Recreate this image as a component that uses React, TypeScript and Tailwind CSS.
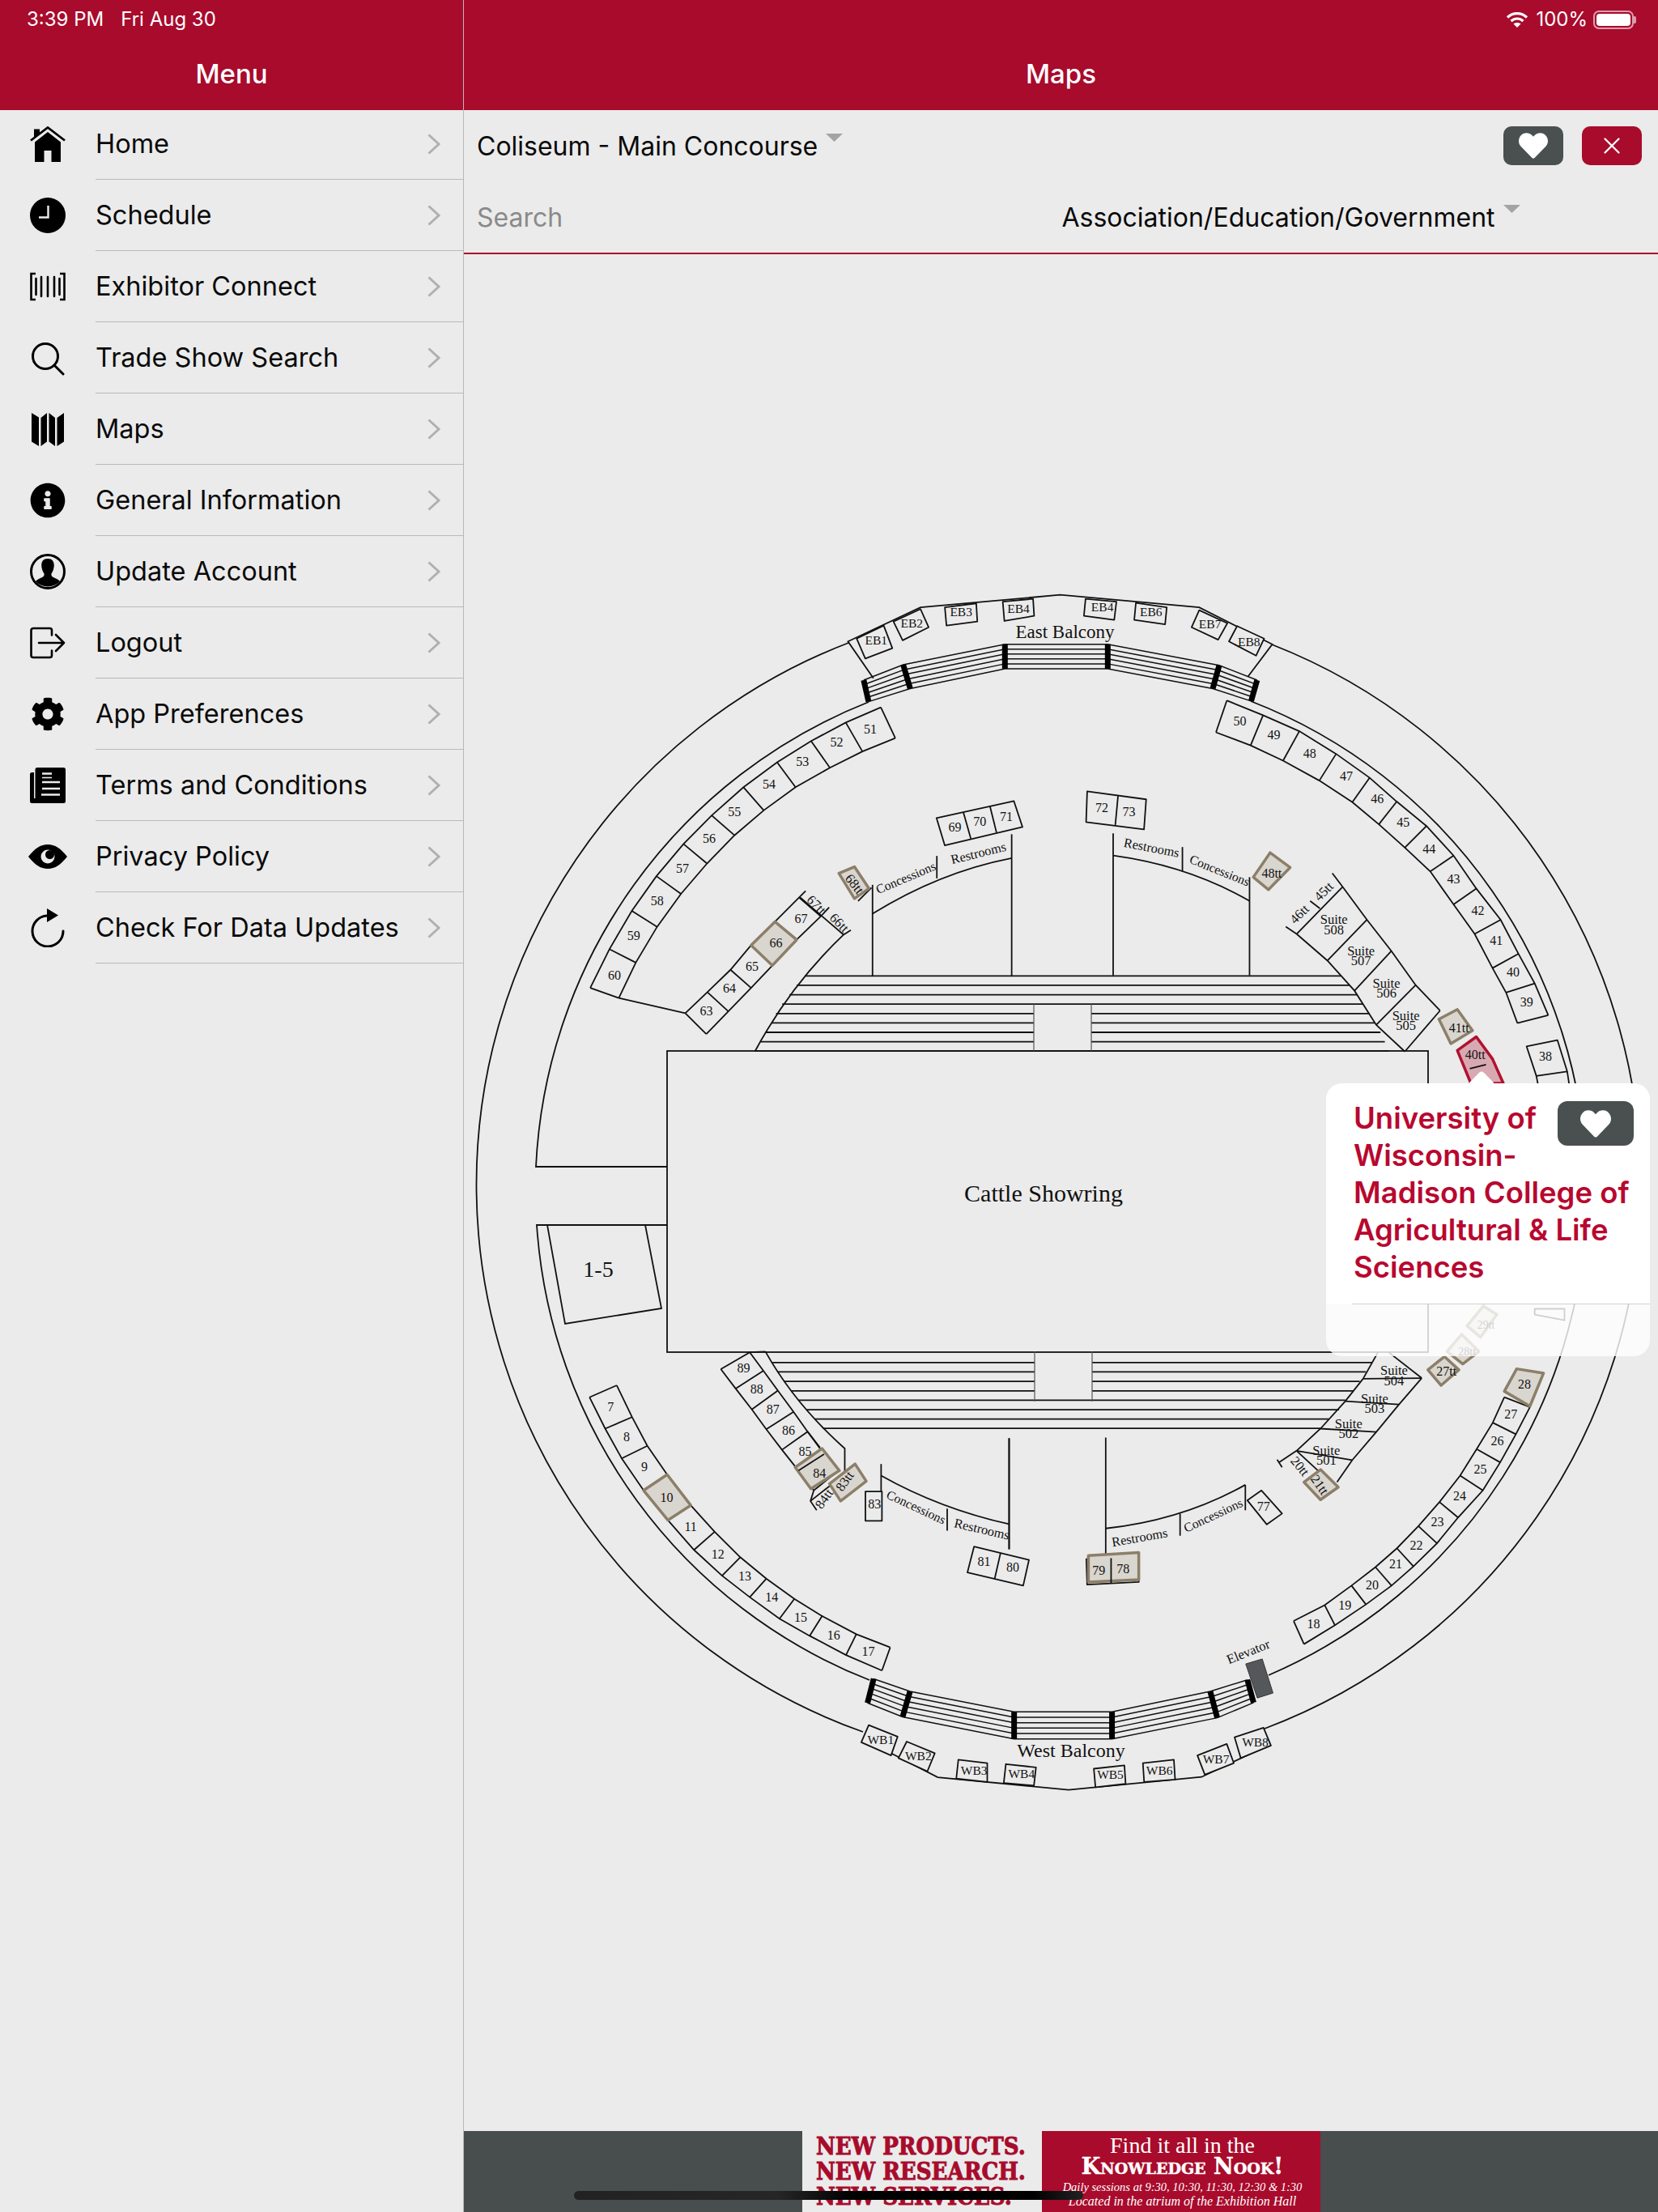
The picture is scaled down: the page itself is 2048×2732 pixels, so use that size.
import type { ReactNode } from "react";
import { FaCog, FaHeart, FaInfoCircle } from "react-icons/fa";
import { X } from "lucide-react";

type P = [number, number];

// crop helpers: map positions were read off zoomed crops of the floor plan
const a = (x: number, y: number): P => [580 + x / 2.24, 700 + y / 2.24];
const b = (x: number, y: number): P => [1000 + x / 1.496, 680 + y / 1.4255];
const c = (x: number, y: number): P => [620 + x / 1.96, 1600 + y / 2.45];
const d = (x: number, y: number): P => [1200 + x / 1.96, 1600 + y / 2.45];

const INK = "#111";
const pts = (list: P[]) => list.map((p) => p.join(",")).join(" ");

function Poly({ p, fill = "none", stroke = INK, w = 1.8 }: { p: P[]; fill?: string; stroke?: string; w?: number }) {
  return <polygon points={pts(p)} fill={fill} stroke={stroke} strokeWidth={w} strokeLinejoin="round" />;
}

function Line({ p, w = 1.8, stroke = INK }: { p: P[]; w?: number; stroke?: string }) {
  return <polyline points={pts(p)} fill="none" stroke={stroke} strokeWidth={w} />;
}

function Hi({ p, red }: { p: P[]; red?: boolean }) {
  return <Poly p={p} fill={red ? "#d8a9b2" : "#d9d5cf"} stroke={red ? "#b0122f" : "#8c7f69"} w={3.5} />;
}

function T({ at, r = 0, s = 16, children }: { at: P; r?: number; s?: number; children: ReactNode }) {
  return (
    <text
      x={at[0]}
      y={at[1]}
      fontSize={s}
      textAnchor="middle"
      dominantBaseline="central"
      fill="#111"
      transform={r ? `rotate(${r} ${at[0]} ${at[1]})` : undefined}
    >
      {children}
    </text>
  );
}

function Strip({ rows }: { rows: P[][] }) {
  return (
    <g>
      <Line p={rows.map((r) => r[0])} />
      <Line p={rows.map((r) => r[1])} />
      {rows.map((r, i) => (
        <Line key={i} p={r} />
      ))}
    </g>
  );
}

const pairs = (m: (x: number, y: number) => P, list: number[][]) => list.map(([x1, y1, x2, y2]) => [m(x1, y1), m(x2, y2)]);

const row60 = pairs(a, [[334,1165,413,1193],[387,1058,460,1095],[449,952,519,996],[517,856,585,905],[592,767,657,821],[670,688,733,743],[758,610,814,674],[851,541,902,610],[945,482,997,556],[1041,431,1087,511],[1138,389,1178,474]]);
const row63 = pairs(a, [[597,1235,655,1293],[658,1177,716,1230],[722,1115,779,1165],[779,1047,838,1103],[845,982,905,1032],[912,915,972,967]]);
const row50 = pairs(b, [[771,264,751,320],[838,290,815,343],[905,318,875,370],[973,358,942,405],[1035,400,1003,443],[1085,442,1052,482],[1140,485,1100,523],[1190,537,1147,565],[1232,595,1190,623],[1277,650,1229,675],[1310,710,1262,735],[1340,762,1287,778],[1365,818,1308,832]]);
const suitesTop = pairs(b, [[985,592,900,675],[1030,650,957,722],[1075,705,1007,775],[1120,765,1047,835],[1165,810,1100,882]]);
const suitesBot = pairs(d, [[1090,250,948,252],[1035,330,905,320],[980,413,845,403],[922,498,787,470]]);
const row28 = pairs(d, [[1290,308,1352,338],[1262,385,1318,420],[1223,465,1280,505],[1183,545,1238,590],[1133,625,1178,672],[1082,698,1127,750],[1030,765,1070,820],[978,822,1017,878],[920,878,955,935],[855,937,880,998],[780,985,805,1055]]);
const row7 = pairs(c, [[212,308,278,272],[250,403,315,368],[290,493,352,455],[343,590,400,542],[402,680,457,635],[465,770,515,715],[533,848,577,792],[600,913,640,857],[672,978,708,918],[745,1030,775,970],[833,1088,858,1025],[920,1135,940,1065]]);
const row89 = pairs(c, [[530,223,600,172],[566,282,633,228],[605,345,668,288],[640,405,706,352],[678,467,740,412],[718,530,780,480],[755,590,815,530]]);

const labels: [P, string][] = [
  ...([[401,1130,"60"],[454,1020,"59"],[519,925,"58"],[589,834,"57"],[663,751,"56"],[733,678,"55"],[829,602,"54"],[921,538,"53"],[1016,486,"52"],[1109,450,"51"],[655,1229,"63"],[719,1165,"64"],[782,1105,"65"],[848,1041,"66"],[917,973,"67"],[1343,720,"69"],[1412,705,"70"],[1485,690,"71"]] as [number, number, string][]).map(([x, y, t]): [P, string] => [a(x, y), t]),
  ...([[795,300,"50"],[858,325,"49"],[924,357,"48"],[992,397,"47"],[1049,437,"46"],[1097,478,"45"],[1145,525,"44"],[1190,578,"43"],[1235,633,"42"],[1269,687,"41"],[1300,742,"40"],[1325,795,"39"],[1360,890,"38"],[540,453,"72"],[590,460,"73"],[854,568,"48tt"],[1200,841,"41tt"],[1230,887,"40tt"],[1321,1468,"28"],[1296,1520,"27"]] as [number, number, string][]).map(([x, y, t]): [P, string] => [b(x, y), t]),
  ...([[263,337,"7"],[302,428,"8"],[345,518,"9"],[399,612,"10"],[457,700,"11"],[523,783,"12"],[588,850,"13"],[653,913,"14"],[723,973,"15"],[803,1028,"16"],[887,1077,"17"],[585,220,"89"],[617,282,"88"],[656,345,"87"],[694,407,"86"],[734,472,"85"],[769,537,"84"],[902,630,"83"],[1167,805,"81"],[1237,823,"80"]] as [number, number, string][]).map(([x, y, t]): [P, string] => [c(x, y), t]),
  ...([[1273,440,"26"],[1232,525,"25"],[1182,607,"24"],[1128,685,"23"],[1077,755,"22"],[1027,813,"21"],[970,877,"20"],[904,937,"19"],[828,993,"18"],[707,638,"77"],[308,832,"79"],[367,827,"78"],[1150,230,"27tt"]] as [number, number, string][]).map(([x, y, t]): [P, string] => [d(x, y), t]),
];

const balconyBoxes: [P[], P, string][] = [
  [[b(87,155),b(137,132),b(153,172),b(103,190)], b(123,157), "EB1"],
  [[b(155,125),b(205,103),b(220,135),b(172,158)], b(189,127), "EB2"],
  [[b(250,100),b(308,93),b(310,125),b(253,132)], b(280,108), "EB3"],
  [[b(357,90),b(413,85),b(415,115),b(360,124)], b(386,102), "EB4"],
  [[b(510,85),b(567,90),b(563,122),b(507,115)], b(541,99), "EB4"],
  [[b(603,92),b(660,100),b(657,130),b(600,122)], b(631,108), "EB6"],
  [[b(720,105),b(772,128),b(755,157),b(706,135)], b(740,129), "EB7"],
  [[b(790,133),b(840,155),b(825,185),b(775,160)], b(812,160), "EB8"],
  [[c(888,1300),c(958,1335),c(942,1392),c(870,1352)], c(917,1345), "WB1"],
  [[c(980,1350),c(1048,1385),c(1030,1440),c(960,1400)], c(1008,1393), "WB2"],
  [[c(1105,1405),c(1175,1415),c(1175,1472),c(1100,1462)], c(1143,1437), "WB3"],
  [[c(1220,1418),c(1293,1428),c(1288,1483),c(1215,1475)], c(1258,1447), "WB4"],
  [[c(1433,1432),c(1507,1422),c(1510,1478),c(1437,1488)], c(1473,1450), "WB5"],
  [[d(415,1415),d(490,1405),d(493,1465),d(418,1472)], d(455,1437), "WB6"],
  [[d(547,1392),d(618,1357),d(635,1415),d(565,1450)], d(592,1403), "WB7"],
  [[d(637,1337),d(707,1308),d(725,1362),d(652,1400)], d(687,1352), "WB8"],
];

const suites: [P, string][] = [
  [b(969,660), "508"],
  [b(1019,715), "507"],
  [b(1066,772), "506"],
  [b(1102,829), "505"],
  [d(1023,245), "504"],
  [d(976,330), "503"],
  [d(913,406), "502"],
  [d(859,487), "501"],
];

function Stairs({ bars }: { bars: P[][] }) {
  const steps = [0, 0.2, 0.4, 0.6, 0.8, 1];
  return (
    <g>
      {steps.map((t) => (
        <Line
          key={t}
          w={1.5}
          p={bars.map(([s, e]): P => [s[0] + (e[0] - s[0]) * t, s[1] + (e[1] - s[1]) * t])}
        />
      ))}
      {bars.map((bar, i) => (
        <Line key={i} p={bar} w={7} stroke="#000" />
      ))}
    </g>
  );
}

const eastBars = [[b(100,228),b(109,266)],[b(173,201),b(186,243)],[b(361,165),b(361,208)],[b(551,165),b(551,208)],[b(757,202),b(745,243)],[b(827,228),b(816,265)]];
const westBars = [[c(900,1160),c(885,1233)],[c(988,1198),c(970,1275)],[c(1240,1260),c(1240,1342)],[c(1477,1260),c(1477,1342)],[d(578,1198),d(595,1278)],[d(668,1163),d(683,1232)]];

const topY = [1132,1158,1184,1210,1236,1262,1288,1314,1340];
const topLeft = [928,905,885,865,848,835,820,805,790];
const topRight = [982,998,1012,1022,1035,1045,1055,1063,1070];
const botY = [203,231,260,289,317,346,374,402];
const botLeft = [655,668,683,700,718,738,757,777];
const botRight = [970,955,940,925,905,890,865,845];

function Bleachers() {
  return (
    <g>
      {topY.map((y, i) => {
        const py = a(0, y)[1];
        const l = a(topLeft[i], y)[0];
        const r = 1000 + topRight[i] / 1.496;
        if (i >= 4 && i <= 7) {
          return (
            <g key={y}>
              <Line p={[[l, py], [1277, py]]} />
              <Line p={[[1348, py], [r, py]]} />
            </g>
          );
        }
        return <Line key={y} p={[[l, py], [r, py]]} />;
      })}
      <Line p={[[1277, 1240], [1277, 1298]]} w={1.2} stroke="#555" />
      <Line p={[[1348, 1240], [1348, 1298]]} w={1.2} stroke="#555" />
      {botY.map((y, i) => {
        const py = c(0, y)[1];
        const l = c(botLeft[i], y)[0];
        const r = d(botRight[i], y)[0];
        if (i <= 3) {
          return (
            <g key={y}>
              <Line p={[[l, py], [1278, py]]} />
              <Line p={[[1349, py], [r, py]]} />
            </g>
          );
        }
        return <Line key={y} p={[[l, py], [r, py]]} />;
      })}
      <Line p={[[1278, 1669], [1278, 1731]]} w={1.2} stroke="#555" />
      <Line p={[[1349, 1669], [1349, 1731]]} w={1.2} stroke="#555" />
    </g>
  );
}

function FloorPlan() {
  return (
    <svg viewBox="573 314 1475 2318" className="block h-full w-full font-['Liberation_Serif',serif]">
      {/* outer and inner rings */}
      <g fill="none" stroke={INK} strokeWidth="1.8">
        <path d="M1048 794 A717 717 0 0 0 1066 2139" />
        <path d="M1562 2135 A717 717 0 0 0 1571 796" />
        <path d="M1073 867 A650 650 0 0 0 662 1441 H824" />
        <path d="M824 1513 H663 A650 650 0 0 0 1074 2075" />
        <path d="M1567 2069 A650 650 0 0 0 1545 866" />
        <rect x="824" y="1298" width="940" height="372" />
        <path d={`M${a(1035,1018).join(" ")} Q${a(890,1155).join(" ")} ${a(790,1340).join(" ")}`} />
        <path d={`M${a(1115,960).join(" ")} Q${a(1300,845).join(" ")} ${a(1500,806).join(" ")}`} />
        <path d={`M${b(561,537).join(" ")} Q${b(700,555).join(" ")} ${b(813,617).join(" ")}`} />
        <path d={`M${c(918,545).join(" ")} Q${c(1060,645).join(" ")} ${c(1228,692).join(" ")}`} />
        <path d={`M${d(325,705).join(" ")} Q${d(510,680).join(" ")} ${d(663,573).join(" ")}`} />
      </g>
      <Bleachers />

      {/* balconies */}
      <Line p={[b(118,225), b(71,160), b(205,100), b(463,78), b(720,100), b(855,165), b(810,222)]} />
      <Line p={[c(880,1345), c(1055,1458), c(1372,1496), d(557,1457), d(720,1360)]} />
      <Stairs bars={eastBars} />
      <Stairs bars={westBars} />
      {balconyBoxes.map(([p, at, t], i) => (
        <g key={i}>
          <Poly p={p} fill="#ebebeb" />
          <T at={at} s={15.5}>{t}</T>
        </g>
      ))}
      <T at={b(472,143)} s={23}>East Balcony</T>
      <T at={c(1378,1377)} s={24}>West Balcony</T>

      {/* booth rows */}
      <Strip rows={row60} />
      <Line p={[a(413,1193), a(597,1235)]} />
      <Strip rows={row63} />
      <Line p={[a(912,915), a(930,897)]} />
      <Line p={[a(915,915), a(1035,1018)]} />
      <Line p={[a(972,967), a(995,942)]} />
      <Line p={[a(1035,1018), a(1055,1005)]} />
      <Strip rows={row50} />
      <Strip rows={suitesTop} />
      <Line p={[b(966,568), b(985,592)]} />
      <Line p={[b(880,662), b(900,675)]} />
      <Line p={[b(925,617), b(943,630)]} />
      <Strip rows={suitesBot} />
      <Line p={[d(1008,170), d(1090,250)]} />
      <Line p={[d(985,170), d(948,252)]} />
      <Line p={[d(787,470), d(865,560)]} />
      <Line p={[d(922,498), d(885,565)]} />
      <Line p={[d(787,470), d(745,505)]} />
      <Line p={[d(740,497), d(752,520)]} />
      <Strip rows={row28} />
      <Strip rows={row7} />
      <Strip rows={row89} />
      <Line p={[c(740,412), c(770,460)]} />
      <Line p={[c(600,172), c(638,170)]} />
      <path d={`M${c(638,170).join(" ")} Q${c(710,330).join(" ")} ${c(830,463).join(" ")} V${c(0,535)[1]}`} fill="none" stroke={INK} strokeWidth="1.8" />
      <Line p={[c(755,590), c(747,622), c(762,650)]} />
      <Line p={[c(747,622), c(795,575)]} />

      {/* upper stands */}
      <Line p={[a(1115,880), a(1115,1132)]} />
      <Line p={[a(1293,800), a(1293,862)]} />
      <Line p={[a(1500,740), a(1500,1132)]} />
      <Poly p={[a(1292,695), a(1506,648), a(1530,720), a(1315,771)]} />
      <Line p={[a(1366,678), a(1387,752)]} />
      <Line p={[a(1440,663), a(1458,735)]} />
      <Line p={[a(1075,925), a(1112,888)]} />
      <Poly p={[b(513,424), b(622,438), b(618,491), b(511,478)]} />
      <Line p={[b(570,432), b(565,483)]} />
      <Line p={[b(561,498), b(561,748)]} />
      <Line p={[b(689,522), b(689,565)]} />
      <Line p={[b(813,575), b(813,748)]} />
      <Poly p={[b(1325,873), b(1382,862), b(1400,917), b(1343,925)]} />
      <Line p={[b(1343,925), b(1350,960)]} />
      <Line p={[b(1400,917), b(1407,960)]} />

      {/* lower stands */}
      <Poly p={[c(880,593), c(920,593), c(920,682), c(880,682)]} />
      <Line p={[c(918,510), c(918,593)]} />
      <Line p={[c(1078,645), c(1078,712)]} />
      <Line p={[c(1228,432), c(1228,768)]} />
      <Poly p={[c(1143,760), c(1276,800), c(1262,878), c(1127,838)]} />
      <Line p={[c(1207,780), c(1193,857)]} />
      <Line p={[d(91,432), d(91,768)]} />
      <Line p={[d(325,430), d(325,790)]} />
      <Line p={[d(505,660), d(505,727)]} />
      <Line p={[d(663,573), d(663,650)]} />
      <Poly p={[d(668,620), d(702,590), d(752,660), d(715,693)]} />
      <Poly p={[d(278,798), d(405,790), d(405,867), d(280,875)]} />
      <Poly p={[d(664,1115), d(704,1100), d(730,1203), d(692,1218)]} fill="#55585a" stroke="#333" w={1} />
      <Line p={[[676, 1513], [698, 1635], [817, 1616], [797, 1513]]} />

      {/* picked booths */}
      <Hi p={[a(845,982), a(905,1032), a(838,1103), a(779,1047)]} />
      <Hi p={[a(1022,848), a(1065,830), a(1105,890), a(1065,918)]} />
      <Hi p={[b(820,575), b(851,532), b(888,558), b(848,597)]} />
      <Hi p={[b(1163,825), b(1197,808), b(1225,845), b(1185,868)]} />
      <Hi red p={[b(1197,880), b(1232,856), b(1262,895), b(1282,938), b(1222,938)]} />
      <Line p={[b(1220,912), b(1250,905)]} />
      <Hi p={[b(1215,1365), b(1245,1330), b(1270,1345), b(1240,1385)]} />
      <Hi p={[b(1178,1410), b(1205,1380), b(1237,1410), b(1207,1432)]} />
      <Poly p={[b(1340,1335), b(1395,1335), b(1395,1355), b(1340,1345)]} />
      <Hi p={[d(1105,225), d(1145,185), d(1180,225), d(1137,272)]} />
      <Hi p={[d(805,565), d(845,527), d(888,580), d(845,618)]} />
      <Hi p={[d(1290,290), d(1320,222), d(1385,235), d(1352,335)]} />
      <Hi p={[c(710,520), c(775,463), c(817,530), c(748,585)]} />
      <Line p={[c(718,530), c(780,480)]} />
      <Hi p={[c(793,570), c(855,510), c(882,562), c(820,622)]} />
      <Hi p={[c(343,590), c(400,542), c(457,635), c(402,680)]} />
      <Hi p={[d(283,787), d(405,778), d(405,860), d(283,867)]} />
      <Line p={[d(338,795), d(338,870)]} />

      {labels.map(([at, t]) => (
        <T key={t + at[0]} at={at}>{t}</T>
      ))}
      <T at={a(960,935)} r={45} s={16.5}>67tt</T>
      <T at={a(1023,985)} r={45} s={16.5}>66tt</T>
      <T at={a(1065,878)} r={52} s={17}>68tt</T>
      <T at={b(905,640)} r={-45} s={16.5}>46tt</T>
      <T at={b(950,600)} r={-45} s={16.5}>45tt</T>
      <T at={c(780,615)} r={-55} s={16.5}>84tt</T>
      <T at={c(830,562)} r={-55} s={16.5}>83tt</T>
      <T at={d(795,517)} r={50} s={16.5}>20tt</T>
      <T at={d(843,573)} r={55} s={16.5}>21tt</T>
      <T at={b(1250,1363)} s={14}>29tt</T>
      <T at={b(1215,1410)} s={14}>28tt</T>
      <T at={a(1207,860)} r={-23} s={15.7}>Concessions</T>
      <T at={a(1408,792)} r={-14} s={16.3}>Restrooms</T>
      <T at={b(632,523)} r={11} s={16.3}>Restrooms</T>
      <T at={b(758,563)} r={22} s={15.7}>Concessions</T>
      <T at={c(1003,640)} r={25} s={15.7}>Concessions</T>
      <T at={c(1162,707)} r={13} s={16.3}>Restrooms</T>
      <T at={d(407,732)} r={-10} s={16.3}>Restrooms</T>
      <T at={d(585,665)} r={-25} s={15.7}>Concessions</T>
      <T at={d(670,1078)} r={-22} s={16.5}>Elevator</T>
      {suites.map(([at, n]) => (
        <text key={n} x={at[0]} y={at[1] - 2} fontSize={16.5} textAnchor="middle" fill="#111">
          <tspan x={at[0]}>Suite</tspan>
          <tspan x={at[0]} dy={12.6}>{n}</tspan>
        </text>
      ))}
      <T at={[739, 1567]} s={28}>1-5</T>
      <T at={[1289, 1473]} s={30}>Cattle Showring</T>
    </svg>
  );
}

const I = "h-[44px] w-[44px] text-black";

const icons: ReactNode[] = [
  <svg viewBox="0 0 44 44" className={I}>
    <path d="M1 17.500L22 1.500L43 17.500" fill="none" stroke="currentColor" strokeWidth="2.800" />
    <path d="M5 3.500H12V9L5 14.500Z" fill="currentColor" />
    <path d="M6 19.500L22 7L38 19.500V44H26.500V30H17.500V44H6Z" fill="currentColor" />
  </svg>,
  <svg viewBox="0 0 44 44" className={I}>
    <circle cx="22" cy="22" r="22" fill="currentColor" />
    <path d="M22.500 10V24.500H11" fill="none" stroke="#ebebeb" strokeWidth="2.400" />
  </svg>,
  <svg viewBox="0 0 44 44" className={I} fill="none" stroke="currentColor">
    <path d="M7 6H1.500V38H7M37 6H42.500V38H37" strokeWidth="2.600" />
    <path d="M7.500 12V32M14 10V34M22 10V34M30 10V34M36.500 12V32" strokeWidth="2.600" strokeLinecap="round" />
  </svg>,
  <svg viewBox="0 0 44 44" className={I} fill="none" stroke="currentColor" strokeWidth="3">
    <circle cx="19" cy="20" r="15.500" />
    <path d="M30 31L41 42" strokeLinecap="round" />
  </svg>,
  <svg viewBox="0 0 44 44" className={I} fill="currentColor">
    <path d="M2 2L11 7.500V43L2 37.500ZM13.500 8L21 2V37.500L13.500 43ZM23.500 2L31 8V43L23.500 37.500ZM33.500 8L42 2V37.500L33.500 43Z" />
  </svg>,
  <FaInfoCircle className="h-[44px] w-[44px]" />,
  <svg viewBox="0 0 44 44" className={I}>
    <circle cx="22" cy="22" r="20.500" fill="none" stroke="currentColor" strokeWidth="3" />
    <path d="M22 6C15.500 6 13.500 11 14.500 17C15 20 16 22 17.500 24.500C18 27 17 28.500 13 30C10 31 8 33 7 34A20.500 20.500 0 0 0 37 34C36 33 34 31 31 30C27 28.500 26 27 26.500 24.500C28 22 29 20 29.500 17C30.500 11 28.500 6 22 6Z" fill="currentColor" />
  </svg>,
  <svg viewBox="0 0 44 44" className={I} fill="none" stroke="currentColor" strokeWidth="2.600">
    <path d="M27 12.500V6.500A2.500 2.500 0 0 0 24.500 4H4A2.500 2.500 0 0 0 1.500 6.500V37.500A2.500 2.500 0 0 0 4 40H24.500A2.500 2.500 0 0 0 27 37.500V31.500" strokeLinecap="round" />
    <path d="M11 22H42M32 12L42 22L32 32" strokeLinecap="round" strokeLinejoin="round" />
  </svg>,
  <FaCog className="h-[42px] w-[42px]" />,
  <svg viewBox="0 0 44 44" className={I}>
    <path d="M9 0H41.500A2.500 2.500 0 0 1 44 2.500V41.500A2.500 2.500 0 0 1 41.500 44H2.500A2.500 2.500 0 0 1 0 41.500V8.500A2.500 2.500 0 0 1 2.500 6H5V38H6.500V2.500A2.500 2.500 0 0 1 9 0Z" fill="currentColor" />
    <path d="M15 7.500H27M15 18H37M15 26H37M14 33.500H37" stroke="#ebebeb" strokeWidth="2.400" />
    <path d="M15 12.500H27" stroke="#ebebeb" strokeWidth="1.600" />
  </svg>,
  <svg viewBox="0 0 48 30" className="h-[30px] w-[48px] text-black">
    <path d="M0 15C8 5 15 0 24 0S40 5 48 15C40 25 33 30 24 30S8 25 0 15Z" fill="currentColor" />
    <circle cx="24" cy="15" r="8.500" fill="#ebebeb" />
    <circle cx="26.500" cy="12.500" r="5.500" fill="currentColor" />
  </svg>,
  <svg viewBox="0 0 44 48" className="h-[48px] w-[44px] text-black">
    <path d="M41 28A19 19 0 1 1 21 9" fill="none" stroke="currentColor" strokeWidth="3" strokeLinecap="round" />
    <path d="M21 0L35 8.500L21 17Z" fill="currentColor" />
  </svg>,
];

const menu = [
  "Home",
  "Schedule",
  "Exhibitor Connect",
  "Trade Show Search",
  "Maps",
  "General Information",
  "Update Account",
  "Logout",
  "App Preferences",
  "Terms and Conditions",
  "Privacy Policy",
  "Check For Data Updates",
];

function Caret() {
  return (
    <svg viewBox="0 0 21 10" className="mb-[20px] ml-[10px] h-[10px] w-[21px] shrink-0">
      <path d="M0 0H21L10.500 10Z" fill="#a3a3a3" />
    </svg>
  );
}

function Sidebar() {
  return (
    <aside className="flex w-[573px] shrink-0 flex-col border-r border-[#b9b9b9]">
      <header className="relative z-10 h-[136px] bg-[#a80b2c] text-white">
        <div className="flex h-[48px] items-center gap-[21px] pl-[33px] text-[24px]">
          <span>3:39 PM</span>
          <span>Fri Aug 30</span>
        </div>
        <div className="flex h-[88px] items-center justify-center text-[33px] font-medium">Menu</div>
      </header>
      <ul className="-mt-[2px]">
        {menu.map((label, i) => (
          <li key={label} className="flex h-[88px]">
            <div className="flex w-[118px] shrink-0 items-center justify-center">{icons[i]}</div>
            <div className="flex flex-1 items-center justify-between border-b border-[#b9b9b9] pr-[28px] text-[32.5px] text-[#0a0a0a]">
              <span className="pt-[2px]">{label}</span>
              <svg viewBox="0 0 16 26" className="h-[26px] w-[16px]">
                <path d="M1.500 1.500L14 13L1.500 24.500" fill="none" stroke="#b0b0b0" strokeWidth="3" />
              </svg>
            </div>
          </li>
        ))}
      </ul>
    </aside>
  );
}

function Popup() {
  return (
    <div className="absolute left-[1065px] top-[1024px] h-[337px] w-[400px] rounded-[20px] bg-white/80">
      <div className="absolute -top-[11px] left-[180px] h-[24px] w-[24px] rotate-45 rounded-[4px] bg-white" />
      <div className="relative h-[273px] rounded-t-[20px] bg-white pl-[32px]">
        <div className="h-full whitespace-nowrap border-b border-[#cfcfcf] pl-[2px] pt-[20px] text-[36.5px] font-semibold leading-[46px] text-[#b8082f]">
          <div>University of</div>
          <div>Wisconsin-</div>
          <div>Madison College of</div>
          <div>Agricultural &amp; Life</div>
          <div>Sciences</div>
        </div>
        <button className="absolute right-[20px] top-[22px] flex h-[55px] w-[94px] items-center justify-center rounded-[12px] bg-[#4a4f4f] text-white">
          <FaHeart className="h-[38px] w-[38px]" />
        </button>
      </div>
    </div>
  );
}

export default function App() {
  return (
    <div className="relative flex h-[2732px] w-[2048px] overflow-hidden bg-[#ebebeb] font-['Inter',sans-serif]">
      <Sidebar />
      <main className="flex min-w-0 flex-1 flex-col">
        <header className="h-[136px] shrink-0 bg-[#a80b2c] text-white">
          <div className="flex h-[48px] items-center justify-end pr-[30px] text-[24px]">
            <svg viewBox="0 0 28 20" className="mr-[9px] h-[20px] w-[28px]" fill="none" stroke="currentColor" strokeWidth="3.200">
              <path d="M2 7.500C9 1 19 1 26 7.500M6.500 12C11 8 17 8 21.500 12" />
              <path d="M14 20L9.500 15.500C12 13.500 16 13.500 18.500 15.500Z" fill="currentColor" stroke="none" />
            </svg>
            <span>100%</span>
            <div className="relative ml-[7px] h-[23px] w-[50px] rounded-[7px] border-2 border-white/60 p-[2px]">
              <div className="h-full w-full rounded-[4px] bg-white" />
              <div className="absolute -right-[5px] top-[5px] h-[9px] w-[3px] rounded-r-[2px] bg-white/60" />
            </div>
          </div>
          <div className="flex h-[88px] items-center justify-center text-[33px] font-medium">Maps</div>
        </header>

        <div className="shrink-0 border-b-2 border-[#a80b2c] text-[32px]">
          <div className="flex h-[88px] items-center justify-between pl-[16px] pr-[20px]">
            <div className="flex items-center text-[#0a0a0a]">
              <span className="pt-[2px]">Coliseum - Main Concourse</span>
              <Caret />
            </div>
            <div className="flex gap-[23px]">
              <button className="flex h-[48px] w-[74px] items-center justify-center rounded-[10px] bg-[#4a4f4f] text-white">
                <FaHeart className="h-[36px] w-[36px]" />
              </button>
              <button className="flex h-[48px] w-[74px] items-center justify-center rounded-[10px] bg-[#a80b2c] text-white">
                <X size={34} strokeWidth={1.6} />
              </button>
            </div>
          </div>
          <div className="grid h-[88px] grid-cols-2 items-center">
            <div className="pl-[16px] pt-[2px] text-[#8a8a8a]">Search</div>
            <div className="flex items-center pl-[1px] text-[#0a0a0a]">
              <span className="pt-[2px]">Association/Education/Government</span>
              <Caret />
            </div>
          </div>
        </div>

        <div className="relative min-h-0 flex-1">
          <FloorPlan />
          <Popup />
        </div>

        <footer className="flex h-[100px] shrink-0 justify-center overflow-hidden bg-[#484d4d]">
          <div className="w-[296px] bg-[#ebebeb] pl-[17px] pt-[3px] font-['DejaVu_Serif',serif] text-[30px] font-bold leading-[31px] text-[#a80b2c]">
            <div className="origin-left scale-x-[.87] whitespace-nowrap [-webkit-text-stroke:1px_#a80b2c]">NEW PRODUCTS.</div>
            <div className="origin-left scale-x-[.87] whitespace-nowrap [-webkit-text-stroke:1px_#a80b2c]">NEW RESEARCH.</div>
            <div className="origin-left scale-x-[.87] whitespace-nowrap [-webkit-text-stroke:1px_#a80b2c]">NEW SERVICES.</div>
          </div>
          <div className="w-[344px] bg-[#a80b2c] pl-[4px] text-center font-['Liberation_Serif',serif] text-white">
            <div className="pt-[4px] text-[28px] leading-[28px]">Find it all in the</div>
            <div className="font-['DejaVu_Serif',serif] text-[27px] font-bold leading-[24px] [-webkit-text-stroke:0.5px_white] [font-variant:small-caps]">Knowledge Nook!</div>
            <div className="mt-[4px] text-[14.5px] italic leading-[18px]">Daily sessions at 9:30, 10:30, 11:30, 12:30 &amp; 1:30</div>
            <div className="text-[16px] italic leading-[18px]">Located in the atrium of the Exhibition Hall</div>
          </div>
        </footer>
      </main>
      <div className="absolute left-[709px] top-[2706px] h-[11px] w-[629px] rounded-full bg-[linear-gradient(90deg,#222_0%,#262626_40%,#000_55%,#000_90%,#222_100%)]" />
    </div>
  );
}
